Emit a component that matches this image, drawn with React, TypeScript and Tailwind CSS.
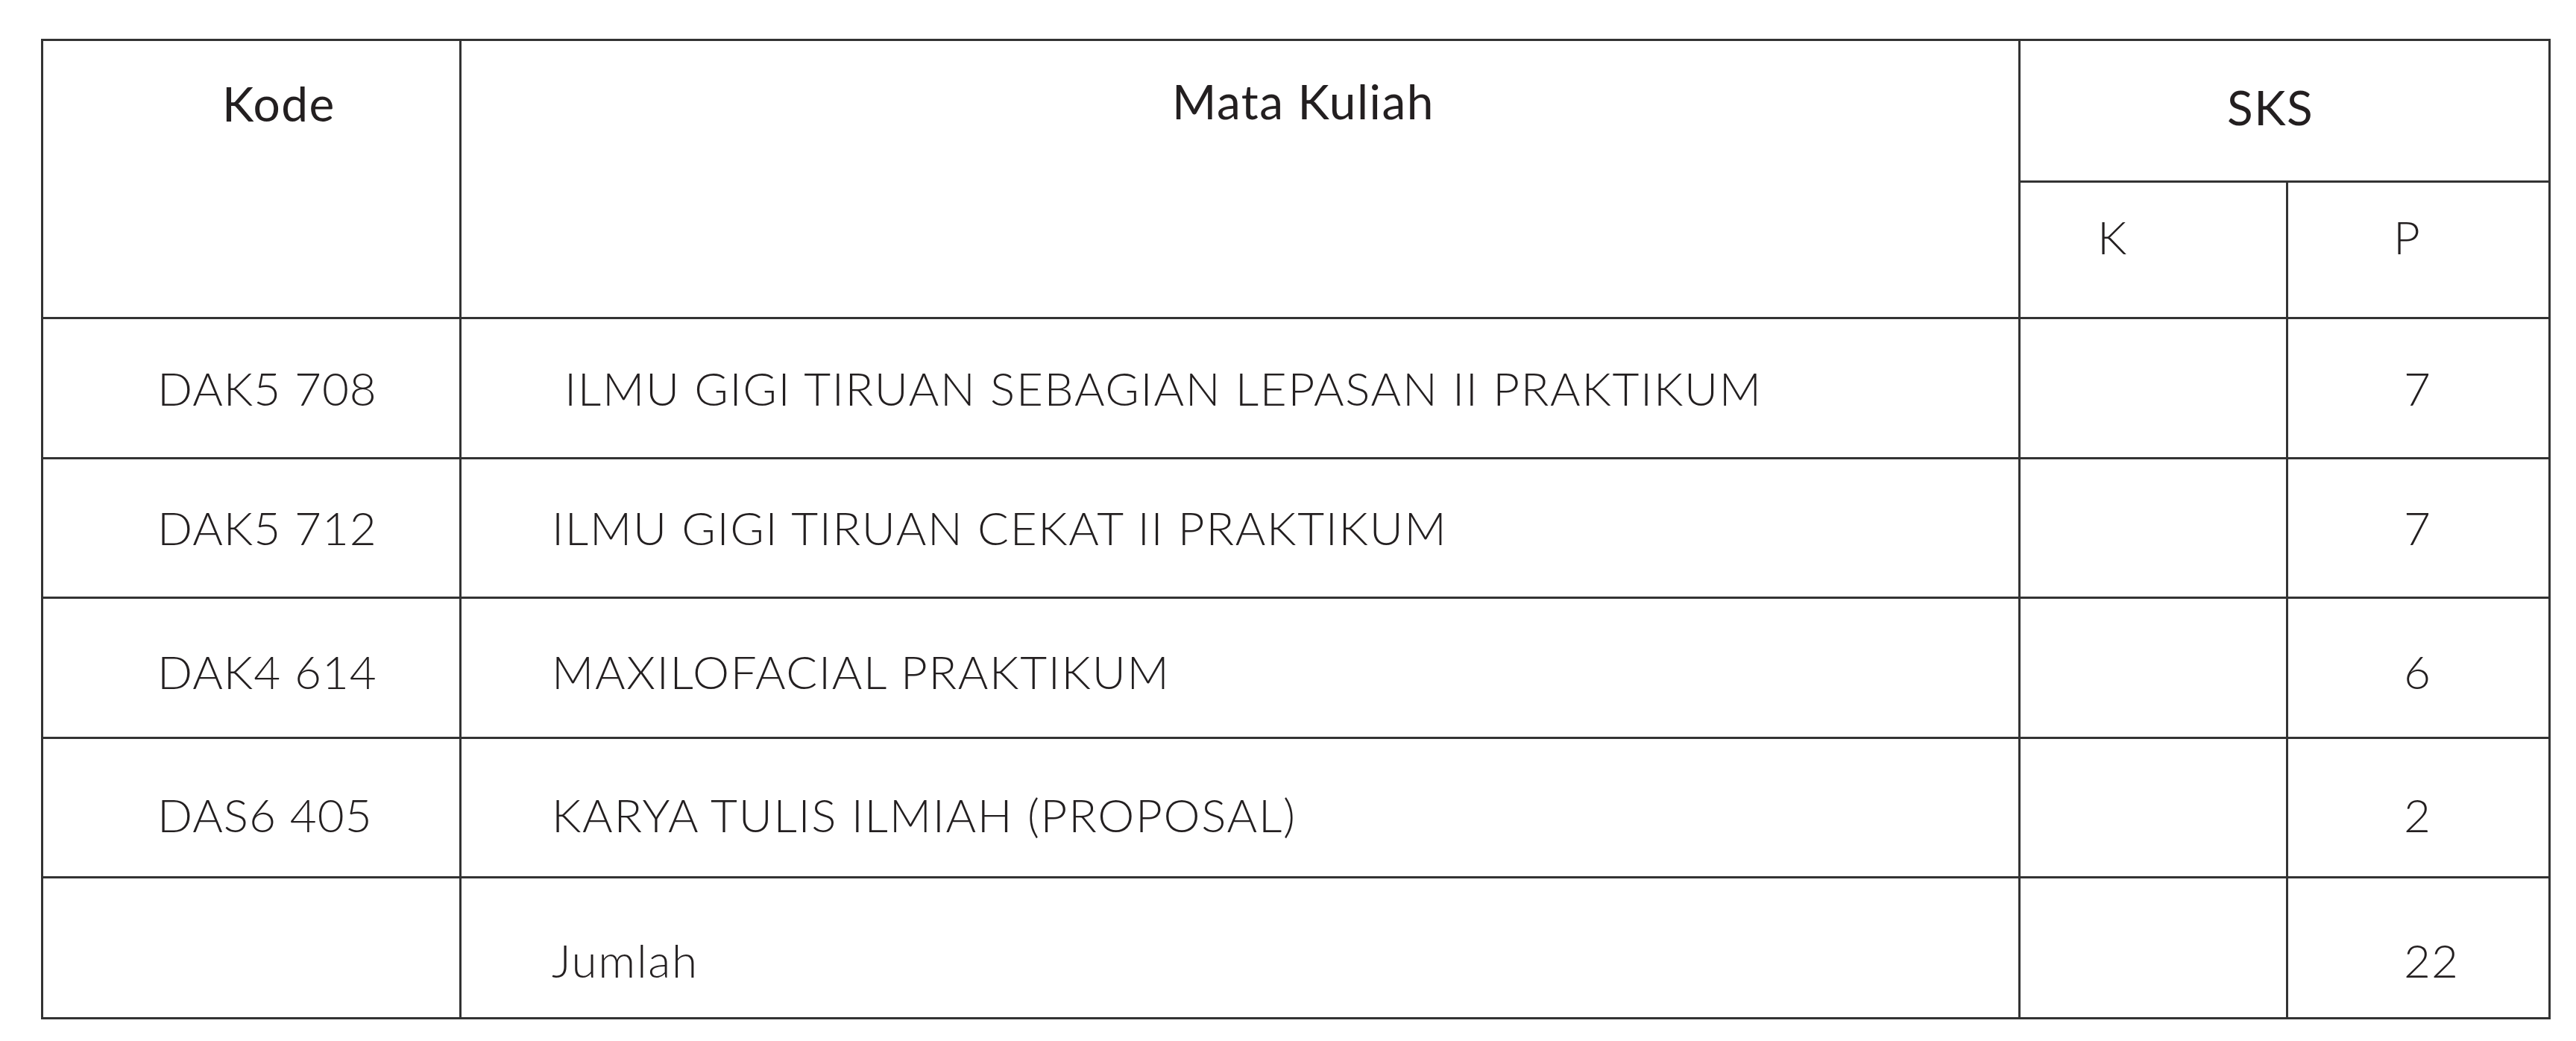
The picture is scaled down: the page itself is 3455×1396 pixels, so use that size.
const rows = [
  { kode: "DAK5 708", nama: "ILMU GIGI TIRUAN SEBAGIAN LEPASAN II PRAKTIKUM", p: "7", pt: "pt-[61px]", indent: "pl-[138px]" },
  { kode: "DAK5 712", nama: "ILMU GIGI TIRUAN CEKAT II PRAKTIKUM", p: "7", pt: "pt-[60px]", indent: "pl-[121px]" },
  { kode: "DAK4 614", nama: "MAXILOFACIAL PRAKTIKUM", p: "6", pt: "pt-[66px]", indent: "pl-[121px]" },
  { kode: "DAS6 405", nama: "KARYA TULIS ILMIAH (PROPOSAL)", p: "2", pt: "pt-[70px]", indent: "pl-[121px]" },
  { kode: "", nama: "Jumlah", p: "22", pt: "pt-[78px]", indent: "pl-[121px]" },
];

export default function App() {
  return (
    <div
      className="min-h-screen bg-white pl-[55px] pt-[52px] text-[62px] leading-none text-[#231f20]"
      style={{ fontFamily: "Lato, 'Open Sans', sans-serif" }}
    >
      <div className="grid w-[3366px] grid-cols-[558px_2088px_356px_349px] grid-rows-[187px_180px_185px_184px_185px_184px_186px] gap-[3px] border-[3px] border-[#333333] bg-[#333333]">
        {/* header */}
        <div className="row-span-2 bg-white pl-[240px] pt-[52px] text-[64px] font-normal tracking-[1.5px]">Kode</div>
        <div className="row-span-2 bg-white pl-[953px] pt-[49px] text-[64px] font-normal tracking-[1.5px]">Mata Kuliah</div>
        <div className="col-span-2 bg-white pl-[277px] pt-[57px] text-[64px] font-normal tracking-[1.5px]">SKS</div>
        <div className="bg-white pl-[103px] pt-[41px] font-light">K</div>
        <div className="bg-white pl-[141px] pt-[41px] font-light">P</div>

        {rows.map((r) => (
          <div key={r.nama} className="contents font-light">
            <div className={`bg-white pl-[153px] tracking-[1px] ${r.pt}`}>{r.kode}</div>
            <div className={`bg-white ${r.indent} ${r.pt} whitespace-nowrap tracking-[1.7px]`}>{r.nama}</div>
            <div className="bg-white" />
            <div className={`bg-white pl-[155px] tracking-[1px] ${r.pt}`}>{r.p}</div>
          </div>
        ))}
      </div>
    </div>
  );
}
